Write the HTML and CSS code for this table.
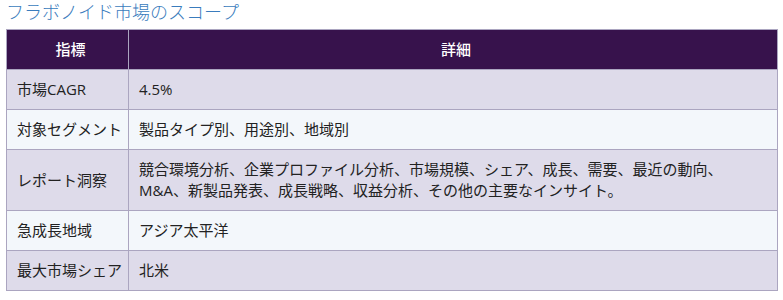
FILE: index.html
```html
<!DOCTYPE html>
<html lang="ja">
<head>
<meta charset="utf-8">
<link rel="stylesheet" href="styles.css">
</head>
<body>
<h2 class="title">フラボノイド市場のスコープ</h2>
<table class="scope">
  <thead>
    <tr><th class="c1">指標</th><th>詳細</th></tr>
  </thead>
  <tbody>
    <tr><td class="k">市場CAGR</td><td class="v">4.5%</td></tr>
    <tr><td class="k">対象セグメント</td><td class="v">製品タイプ別、用途別、地域別</td></tr>
    <tr><td class="k">レポート洞察</td><td class="v">競合環境分析、企業プロファイル分析、市場規模、シェア、成長、需要、最近の動向、M&amp;A、新製品発表、成長戦略、収益分析、その他の主要なインサイト。</td></tr>
    <tr><td class="k">急成長地域</td><td class="v">アジア太平洋</td></tr>
    <tr><td class="k">最大市場シェア</td><td class="v">北米</td></tr>
  </tbody>
</table>
</body>
</html>
```
FILE: styles.css
```css
html, body {
  margin: 0;
  padding: 0;
  background: #ffffff;
}
body {
  padding: 0 6px;
  font-family: "Open Sans", "Noto Sans CJK JP", sans-serif;
  color: #222222;
}
.title {
  margin: 0 0 7px 0;
  font-size: 18px;
  line-height: 22px;
  color: #3a7cbd;
  font-family: "Noto Sans CJK JP", sans-serif;
  font-weight: 300;
}
.scope {
  width: 772px;
  border-collapse: collapse;
  table-layout: fixed;
  font-size: 15px;
  line-height: 21px;
}
.scope th, .scope td {
  border: 1px solid #aba5c0;
  padding: 9px 4px 9px 10px;
  text-align: left;
  vertical-align: middle;
}
.scope .v {
  padding-right: 24px;
}
.scope .k {
  white-space: nowrap;
}
.scope th {
  background: #37124c;
  color: #ffffff;
  font-weight: 500;
  text-align: center;
}
.scope .c1 {
  width: 107px;
}
.scope tbody tr:nth-child(odd) td {
  background: #dedbea;
}
.scope tbody tr:nth-child(even) td {
  background: #f3f7fb;
}
```
